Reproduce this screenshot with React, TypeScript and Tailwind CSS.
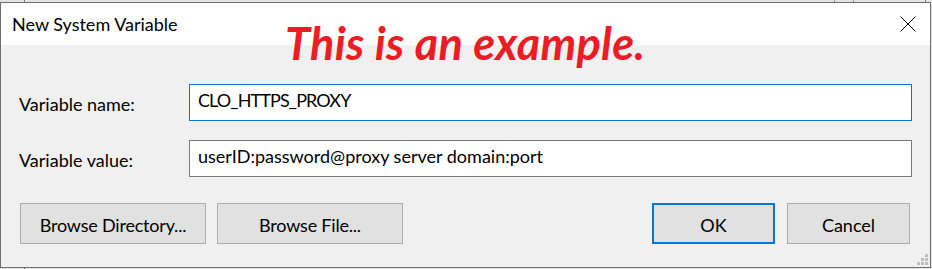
import React from "react";

function CloseIcon() {
  return (
    <svg width="16" height="16" viewBox="0 0 16 16" className="block">
      <path d="M0.5 0.5 L15.5 15.5 M15.5 0.5 L0.5 15.5" stroke="#000" strokeWidth="1" fill="none" />
    </svg>
  );
}

function Grip() {
  // resize grip dots, bottom-right corner
  const dots = [
    [8, 0],
    [4, 4],
    [8, 4],
    [0, 8],
    [4, 8],
    [8, 8],
  ];
  return (
    <svg width="11" height="11" viewBox="0 0 11 11" className="absolute right-[2px] bottom-[2px]">
      {dots.map(([x, y], i) => (
        <rect key={i} x={x} y={y} width="3" height="3" fill="#bdbdbd" />
      ))}
    </svg>
  );
}

function Field({
  label,
  value,
  focused,
  tight,
}: {
  label: string;
  value: string;
  focused?: boolean;
  tight?: boolean;
}) {
  return (
    <div className="flex h-[37px]">
      <div className="w-[170px] pt-[11px] text-[18px] leading-none">{label}</div>
      <div
        className={
          focused
            ? "w-[723px] h-[37px] border border-[#0078d7] bg-white pl-[8px] pt-[6px] text-[18px] leading-none"
            : "w-[723px] h-[37px] border border-[#7a7a7a] bg-white pl-[8px] pt-[6px] text-[18px] leading-none"
        }
      >
        <span className={tight ? "tracking-[-0.9px]" : ""}>{value}</span>
      </div>
    </div>
  );
}

export default function App() {
  return (
    <div className="relative w-[932px] h-[269px] overflow-hidden bg-[#e4e4e4] text-black font-['Lato',sans-serif]">
      {/* bits of the window behind */}
      <div className="absolute left-[24px] top-0 w-px h-[2px] bg-[#7a7a7a]" />
      <div className="absolute left-[834px] top-0 w-px h-[2px] bg-[#9a9a9a]" />
      <div className="absolute left-[853px] top-0 w-px h-[2px] bg-[#9a9a9a]" />
      <div className="absolute left-[925px] top-0 w-px h-[2px] bg-[#7a7a7a]" />
      <div className="absolute left-[24px] bottom-0 w-px h-px bg-[#555]" />

      <div className="mt-[2px] w-[931px] h-[266px] border border-[#6e6e6e] bg-[#f0f0f0] flex flex-col relative">
        <div className="h-[42px] bg-white flex items-center justify-between pl-[11px] pr-[14px]">
          <span className="text-[18px] leading-none">New System Variable</span>
          <CloseIcon />
        </div>

        <div className="flex-1 pl-[18px] pt-[39px]">
          <Field label="Variable name:" value="CLO_HTTPS_PROXY" focused tight />
          <div className="mt-[19px]">
            <Field label="Variable value:" value="userID:password@proxy server domain:port" />
          </div>

          <div className="mt-[26px] flex pl-px pr-[20px]">
            <div className="flex gap-[11px]">
              <button className="w-[186px] h-[41px] bg-[#e1e1e1] border border-[#adadad] pt-[2px] text-[18px] leading-none tracking-[-0.2px]">
                Browse Directory...
              </button>
              <button className="w-[186px] h-[41px] bg-[#e1e1e1] border border-[#adadad] pt-[2px] text-[18px] leading-none tracking-[-0.2px]">
                Browse File...
              </button>
            </div>
            <div className="ml-auto flex gap-[12px]">
              <button className="w-[123px] h-[41px] bg-[#e1e1e1] border-2 border-[#0078d7] pt-[2px] text-[18px] leading-none">
                OK
              </button>
              <button className="w-[123px] h-[41px] bg-[#e1e1e1] border border-[#adadad] pt-[2px] text-[18px] leading-none">
                Cancel
              </button>
            </div>
          </div>
        </div>

        <Grip />
      </div>

      {/* overlay note */}
      <div className="absolute left-[285px] top-[21px] text-[45px] leading-none font-bold italic tracking-[0.3px] text-[#ed1c24] whitespace-nowrap">
        This is an example.
      </div>
    </div>
  );
}
